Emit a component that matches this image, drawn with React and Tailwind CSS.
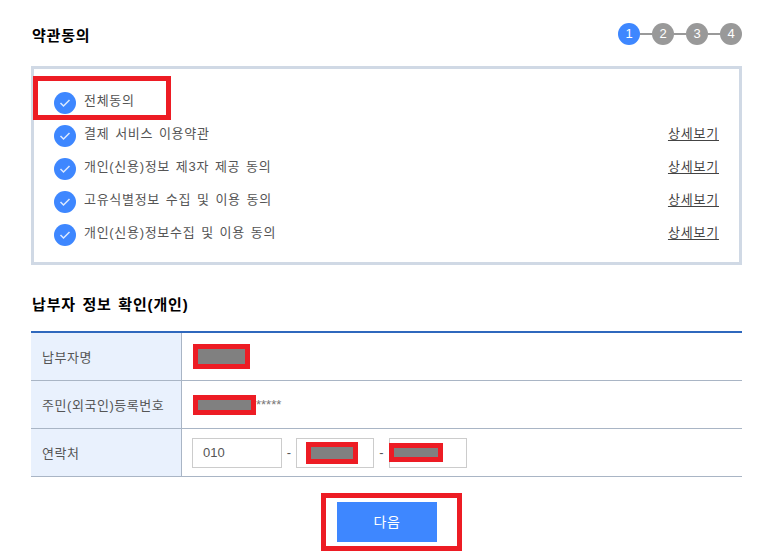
import React from 'react';

const FONT = "font-['Liberation_Sans','Noto_Sans_CJK_KR',sans-serif]";

const TERMS = [
  { label: '전체동의' },
  { label: '결제 서비스 이용약관', more: true },
  { label: '개인(신용)정보 제3자 제공 동의', more: true },
  { label: '고유식별정보 수집 및 이용 동의', more: true },
  { label: '개인(신용)정보수집 및 이용 동의', more: true },
];

function Check() {
  return (
    <span className="flex h-[22px] w-[22px] shrink-0 items-center justify-center rounded-full bg-[#3e87ff]">
      <svg width="12" height="10" viewBox="0 0 12 10" fill="none" stroke="#dce9ff" strokeWidth="1.5">
        <path d="M1.5 5 L4.5 8 L10.5 2" />
      </svg>
    </span>
  );
}

function Steps() {
  return (
    <div className="flex items-center">
      {[1, 2, 3, 4].map(n => (
        <React.Fragment key={n}>
          {n > 1 && <span className="h-[2px] w-3 bg-[#999999]" />}
          <span className={`flex h-[22px] w-[22px] items-center justify-center rounded-full text-[13px] text-white ${n === 1 ? 'bg-[#3e87ff]' : 'bg-[#999999]'}`}>
            {n}
          </span>
        </React.Fragment>
      ))}
    </div>
  );
}

function Masked({ w, h }) {
  return (
    <span className="block border-[5px] border-[#ed1c24]">
      <span className={`block bg-[#808080] ${w} ${h}`} />
    </span>
  );
}

function Row({ label, children }) {
  return (
    <div className="flex h-12 border-b border-[#a9b5c5]">
      <div className="flex w-[151px] shrink-0 items-center border-r border-[#a9b5c5] bg-[#e9f1fd] pl-[11px] pt-[2px] text-[13px] tracking-[0.55px] text-[#555555]">
        {label}
      </div>
      <div className="flex flex-1 items-center pl-[10px]">{children}</div>
    </div>
  );
}

export default function App() {
  return (
    <div className={`${FONT} h-[557px] w-[761px] overflow-hidden bg-white pl-[31px] pr-[19px] pt-[23px]`}>
      <div className="flex h-[22px] items-center justify-between">
        <h2 className="ml-px pt-1 text-[15px] font-bold tracking-[0.8px] text-black">약관동의</h2>
        <Steps />
      </div>

      <div className="relative mt-[21px] h-[199px] border-[3px] border-[#d0d9e5] px-5 pt-[23px]">
        <div className="flex flex-col gap-[11px]">
          {TERMS.map(t => (
            <div key={t.label} className="flex h-[22px] items-center">
              <Check />
              <span className="ml-2 -mt-[5px] text-[13px] tracking-[0.7px] [word-spacing:1.5px] text-[#555555]">{t.label}</span>
              {t.more && (
                <a className="ml-auto -mt-[5px] text-[13px] tracking-[0.8px] text-[#444444] underline underline-offset-2">상세보기</a>
              )}
            </div>
          ))}
        </div>
        <div className="absolute left-[-1px] top-[7px] h-11 w-[138px] border-[5px] border-[#ed1c24]" />
      </div>

      <h2 className="ml-px mt-[30px] h-[36px] text-[15px] font-bold leading-5 tracking-[0.85px] [word-spacing:1.5px] text-black">납부자 정보 확인(개인)</h2>

      <div className="border-t-2 border-[#2f68bd]">
        <Row label="납부자명">
          <div className="ml-px"><Masked w="w-[47px]" h="h-[15px]" /></div>
        </Row>
        <Row label="주민(외국인)등록번호">
          <div className="ml-px flex items-center">
            <Masked w="w-[53px]" h="h-[10px]" />
            <span className="text-[13px] leading-3 text-[#777777]">*****</span>
          </div>
        </Row>
        <Row label="연락처">
          <div className="flex h-[30px] w-[90px] items-center border border-[#cccccc] px-[10px] pt-px text-[13px] text-[#555555]">010</div>
          <span className="mx-1 w-[6px] text-center text-[13px] text-[#555555]">-</span>
          <div className="relative h-[30px] w-[78px] border border-[#cccccc]">
            <div className="absolute left-[9px] top-[3px]"><Masked w="w-[42px]" h="h-3" /></div>
          </div>
          <span className="mx-1 w-[7px] text-center text-[13px] text-[#555555]">-</span>
          <div className="relative h-[30px] w-[78px] border border-[#cccccc]">
            <div className="absolute left-[-1px] top-1"><Masked w="w-[44px]" h="h-[9px]" /></div>
          </div>
        </Row>
      </div>

      <div className="mt-4 ml-[290px] flex h-[58px] w-[141px] items-center border-[5px] border-[#ed1c24] pl-[11px]">
        <button className="h-10 w-[100px] bg-[#3e87ff] text-[14px] tracking-[0.6px] text-white">다음</button>
      </div>
    </div>
  );
}
